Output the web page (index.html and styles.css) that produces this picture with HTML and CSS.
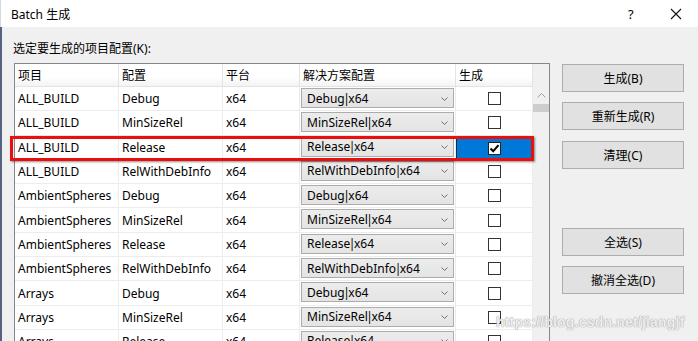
FILE: index.html
```html
<!DOCTYPE html>
<html>
<head>
<meta charset="utf-8">
<link rel="stylesheet" href="styles.css">
</head>
<body>
<div class="window">
  <div class="titlebar">
    <span class="title">Batch 生成</span>
    <span class="help">?</span>
    <span class="close"><svg width="12" height="12" viewBox="0 0 12 12"><path d="M1 1 L11 11 M11 1 L1 11" stroke="#111" stroke-width="1.1" fill="none"/></svg></span>
  </div>
  <div class="body">
    <div class="label">选定要生成的项目配置(K):</div>
    <div class="content">
      <div class="table">
        <div class="header row">
          <div class="cell">项目</div>
          <div class="cell">配置</div>
          <div class="cell">平台</div>
          <div class="cell">解决方案配置</div>
          <div class="cell">生成</div>
        </div>
        <div class="lower">
          <div class="rows">
            <div class="row"><div class="cell">ALL_BUILD</div><div class="cell">Debug</div><div class="cell">x64</div><div class="cell combo-cell"><div class="combo"><span>Debug<i class="pipe">|</i>x64</span><svg class="chev" width="7" height="4" viewBox="0 0 7 4"><path d="M0.5 0.5 L3.5 3.5 L6.5 0.5" stroke="#707070" fill="none"/></svg></div></div><div class="cell check-cell"><span class="check"></span></div></div>
            <div class="row"><div class="cell">ALL_BUILD</div><div class="cell">MinSizeRel</div><div class="cell">x64</div><div class="cell combo-cell"><div class="combo"><span>MinSizeRel<i class="pipe">|</i>x64</span><svg class="chev" width="7" height="4" viewBox="0 0 7 4"><path d="M0.5 0.5 L3.5 3.5 L6.5 0.5" stroke="#707070" fill="none"/></svg></div></div><div class="cell check-cell"><span class="check"></span></div></div>
            <div class="row"><div class="cell">ALL_BUILD</div><div class="cell">Release</div><div class="cell">x64</div><div class="cell combo-cell"><div class="combo"><span>Release<i class="pipe">|</i>x64</span><svg class="chev" width="7" height="4" viewBox="0 0 7 4"><path d="M0.5 0.5 L3.5 3.5 L6.5 0.5" stroke="#707070" fill="none"/></svg></div></div><div class="cell check-cell selected"><span class="check checked"><svg width="11" height="11" viewBox="0 0 11 11"><path d="M1.5 5.5 L4.2 8.2 L9.5 2.2" stroke="#000" stroke-width="2" fill="none"/></svg></span></div></div>
            <div class="row"><div class="cell">ALL_BUILD</div><div class="cell">RelWithDebInfo</div><div class="cell">x64</div><div class="cell combo-cell"><div class="combo"><span>RelWithDebInfo<i class="pipe">|</i>x64</span><svg class="chev" width="7" height="4" viewBox="0 0 7 4"><path d="M0.5 0.5 L3.5 3.5 L6.5 0.5" stroke="#707070" fill="none"/></svg></div></div><div class="cell check-cell"><span class="check"></span></div></div>
            <div class="row"><div class="cell">AmbientSpheres</div><div class="cell">Debug</div><div class="cell">x64</div><div class="cell combo-cell"><div class="combo"><span>Debug<i class="pipe">|</i>x64</span><svg class="chev" width="7" height="4" viewBox="0 0 7 4"><path d="M0.5 0.5 L3.5 3.5 L6.5 0.5" stroke="#707070" fill="none"/></svg></div></div><div class="cell check-cell"><span class="check"></span></div></div>
            <div class="row"><div class="cell">AmbientSpheres</div><div class="cell">MinSizeRel</div><div class="cell">x64</div><div class="cell combo-cell"><div class="combo"><span>MinSizeRel<i class="pipe">|</i>x64</span><svg class="chev" width="7" height="4" viewBox="0 0 7 4"><path d="M0.5 0.5 L3.5 3.5 L6.5 0.5" stroke="#707070" fill="none"/></svg></div></div><div class="cell check-cell"><span class="check"></span></div></div>
            <div class="row"><div class="cell">AmbientSpheres</div><div class="cell">Release</div><div class="cell">x64</div><div class="cell combo-cell"><div class="combo"><span>Release<i class="pipe">|</i>x64</span><svg class="chev" width="7" height="4" viewBox="0 0 7 4"><path d="M0.5 0.5 L3.5 3.5 L6.5 0.5" stroke="#707070" fill="none"/></svg></div></div><div class="cell check-cell"><span class="check"></span></div></div>
            <div class="row"><div class="cell">AmbientSpheres</div><div class="cell">RelWithDebInfo</div><div class="cell">x64</div><div class="cell combo-cell"><div class="combo"><span>RelWithDebInfo<i class="pipe">|</i>x64</span><svg class="chev" width="7" height="4" viewBox="0 0 7 4"><path d="M0.5 0.5 L3.5 3.5 L6.5 0.5" stroke="#707070" fill="none"/></svg></div></div><div class="cell check-cell"><span class="check"></span></div></div>
            <div class="row"><div class="cell">Arrays</div><div class="cell">Debug</div><div class="cell">x64</div><div class="cell combo-cell"><div class="combo"><span>Debug<i class="pipe">|</i>x64</span><svg class="chev" width="7" height="4" viewBox="0 0 7 4"><path d="M0.5 0.5 L3.5 3.5 L6.5 0.5" stroke="#707070" fill="none"/></svg></div></div><div class="cell check-cell"><span class="check"></span></div></div>
            <div class="row"><div class="cell">Arrays</div><div class="cell">MinSizeRel</div><div class="cell">x64</div><div class="cell combo-cell"><div class="combo"><span>MinSizeRel<i class="pipe">|</i>x64</span><svg class="chev" width="7" height="4" viewBox="0 0 7 4"><path d="M0.5 0.5 L3.5 3.5 L6.5 0.5" stroke="#707070" fill="none"/></svg></div></div><div class="cell check-cell"><span class="check"></span></div></div>
            <div class="row"><div class="cell">Arrays</div><div class="cell">Release</div><div class="cell">x64</div><div class="cell combo-cell"><div class="combo"><span>Release<i class="pipe">|</i>x64</span><svg class="chev" width="7" height="4" viewBox="0 0 7 4"><path d="M0.5 0.5 L3.5 3.5 L6.5 0.5" stroke="#707070" fill="none"/></svg></div></div><div class="cell check-cell"><span class="check"></span></div></div>
          </div>
          <div class="scrollbar">
            <div class="arrow"><svg width="9" height="5" viewBox="0 0 9 5"><path d="M0.5 4.5 L4.5 0.5 L8.5 4.5" stroke="#a0a0a0" fill="none"/></svg></div>
            <div class="thumb"></div>
          </div>
        </div>
      </div>
      <div class="buttons">
        <div class="btn b1">生成(B)</div>
        <div class="btn b2">重新生成(R)</div>
        <div class="btn b3">清理(C)</div>
        <div class="btn b4">全选(S)</div>
        <div class="btn b5">撤消全选(D)</div>
      </div>
    </div>
  </div>
  <div class="redbox"></div>
  <div class="watermark">https://blog.csdn.net/jiangjf</div>
</div>
</body>
</html>
```
FILE: styles.css
```css
* { box-sizing: border-box; }
html, body { margin: 0; padding: 0; }
body {
  width: 698px;
  height: 341px;
  overflow: hidden;
  font-family: "Noto Sans", "Noto Sans CJK SC", sans-serif;
  font-size: 12px;
  color: #000;
  background: #f0f0f0;
}
.window {
  position: relative;
  width: 698px;
  height: 341px;
  overflow: hidden;
}
.titlebar {
  height: 27px;
  background: #fff;
  display: flex;
  align-items: center;
  border-left: 1px solid #d6d9e0;
}
.title { margin-left: 10px; flex: 1; }
.help { width: 14px; margin-right: 28px; font-size: 13px; }
.close { width: 12px; height: 12px; margin-right: 16px; display: flex; }
.body {
  height: 314px;
  border-left: 2px solid #56627f;
  padding-top: 13px;
}
.label {
  margin-left: 11px;
  height: 17px;
  line-height: 17px;
}
.content {
  display: flex;
  margin-top: 6px;
  margin-left: 12px;
}
.table {
  width: 536px;
  height: 400px;
  border: 1px solid #828790;
  background: #f0f0f0;
  flex: none;
}
.row {
  display: grid;
  grid-template-columns: 104px 104px 77px 156px 77px;
  height: 24.3px;
  background: #fff;
  border-bottom: 1px solid #ececec;
}
.cell {
  border-right: 1px solid #ececec;
  padding-left: 3px;
  display: flex;
  align-items: center;
  white-space: nowrap;
  overflow: hidden;
}
.header {
  width: 518px;
  height: 23px;
  background: linear-gradient(#fff, #fff 60%, #f3f3f3);
  border-bottom: 1px solid #e3e3e3;
}
.header .cell { border-right: 1px solid #e3e3e3; padding-left: 3px; }
.lower { display: flex; }
.rows { width: 518px; }
.combo-cell { padding-left: 1px; align-items: flex-start; padding-top: 1px; }
.combo {
  width: 153px;
  height: 20px;
  border: 1px solid #acacac;
  background: linear-gradient(#ececec, #e4e4e4);
  display: flex;
  align-items: center;
  justify-content: space-between;
  padding: 0 5px 0 5px;
}
.pipe { font-style: normal; margin: 0 -1.5px; }
.chev { margin-top: 1px; }
.check-cell { justify-content: center; padding-left: 0; }
.check {
  width: 13px;
  height: 13px;
  border: 1px solid #333;
  background: #fff;
  display: flex;
  align-items: center;
  justify-content: center;
}
.selected {
  background: #0078d7;
  box-shadow: inset 0 0 0 1px #0d2a4a;
  margin: 2px 0 0 0;
}
.checked { border-color: #222; }
.scrollbar {
  width: 16px;
  background: #f0f0f0;
  display: flex;
  flex-direction: column;
  align-items: center;
}
.arrow { height: 17px; display: flex; align-items: center; justify-content: center; }
.thumb { width: 16px; height: 8px; background: #cdcdcd; }
.buttons {
  display: flex;
  flex-direction: column;
  margin-left: 12px;
}
.btn {
  width: 122px;
  height: 28px;
  background: #e1e1e1;
  border: 1px solid #adadad;
  display: flex;
  align-items: center;
  justify-content: center;
  font-size: 12px;
}
.b1 { margin-top: 1px; }
.b2 { margin-top: 10px; }
.b3 { margin-top: 11px; }
.b4 { margin-top: 59px; }
.b5 { margin-top: 10px; }
.redbox {
  position: absolute;
  left: 10px;
  top: 136px;
  width: 524px;
  height: 25px;
  border: 3px solid #e8100f;
  box-shadow: 1px 1px 2px rgba(0,0,0,0.45);
}
.watermark {
  position: absolute;
  left: 496px;
  top: 314px;
  font-family: "Liberation Sans", sans-serif;
  font-size: 14px;
  font-weight: bold;
  color: rgba(255,255,255,0.85);
  text-shadow: 0 0 1px #9a9a9a, 0 0 1px #9a9a9a;
  letter-spacing: 0.2px;
}
```
